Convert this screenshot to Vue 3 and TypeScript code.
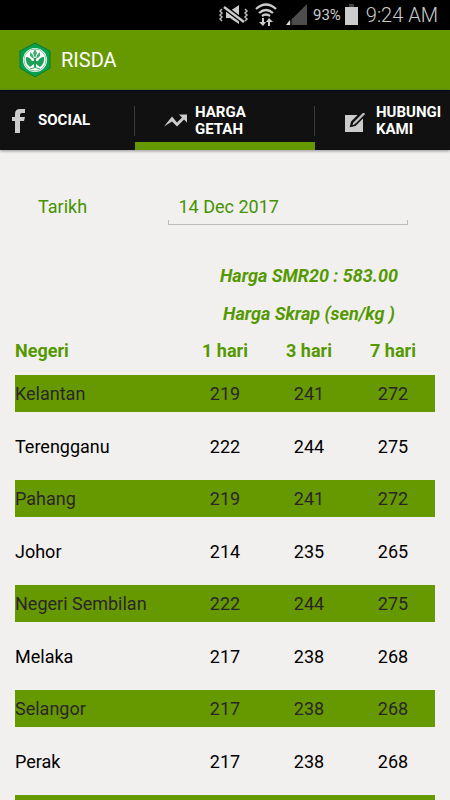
<script setup lang="ts">
import { ref } from 'vue'

interface Price {
  state: string
  h1: string
  h3: string
  h7: string
}

type TabId = 'social' | 'harga' | 'hubungi'

const tabs: { id: TabId; label: string }[] = [
  { id: 'social', label: 'SOCIAL' },
  { id: 'harga', label: 'HARGA GETAH' },
  { id: 'hubungi', label: 'HUBUNGI KAMI' },
]
const active = ref<TabId>('harga')
const date = ref('14 Dec 2017')

const prices: Price[] = [
  { state: 'Kelantan', h1: '219', h3: '241', h7: '272' },
  { state: 'Terengganu', h1: '222', h3: '244', h7: '275' },
  { state: 'Pahang', h1: '219', h3: '241', h7: '272' },
  { state: 'Johor', h1: '214', h3: '235', h7: '265' },
  { state: 'Negeri Sembilan', h1: '222', h3: '244', h7: '275' },
  { state: 'Melaka', h1: '217', h3: '238', h7: '268' },
  { state: 'Selangor', h1: '217', h3: '238', h7: '268' },
  { state: 'Perak', h1: '217', h3: '238', h7: '268' },
  { state: '', h1: '', h3: '', h7: '' },
]
</script>

<template>
  <div class="page">
    <div class="status">
      <svg class="mute" width="30" height="22" viewBox="0 0 30 22" aria-hidden="true">
        <path d="M7 7h4l9-6v19l-9-6H7z" fill="#ccc" />
        <path d="M5 3l20 15" stroke="#000" stroke-width="5" />
        <path d="M5 3l20 15" stroke="#ccc" stroke-width="2.4" />
        <path d="M3 5l-2 2 2 2-2 2 2 2-2 2 2 2M26 5l2 2-2 2 2 2-2 2 2 2-2 2" fill="none" stroke="#bbb" stroke-width="1.5" />
      </svg>
      <svg class="wifi" width="22" height="24" viewBox="0 0 22 24" aria-hidden="true">
        <g fill="none" stroke="#ccc" stroke-width="2.2">
          <path d="M1 6Q11-3 21 6" />
          <path d="M4 10q7-6 14 0" />
          <path d="M7 13q4-3 8 0" />
        </g>
        <path d="M7 15h2v4h2l-3 4-4-4h3zM13 23h2v-4h3l-4-4-3 4h2z" fill="#ccc" />
      </svg>
      <svg class="signal" width="21" height="22" viewBox="0 0 21 22" aria-hidden="true">
        <path d="M21 0v21H0z" fill="#4d4d4d" />
        <path d="M4 16v5H0z" fill="#ddd" />
        <path d="M5 15v7" stroke="#000" stroke-width="1" />
      </svg>
      <span class="percent">93%</span>
      <svg class="battery" width="13" height="22" viewBox="0 0 13 22" aria-hidden="true">
        <path d="M4 0h5v3H4z" fill="#444" />
        <path d="M0 3h13v18H0z" fill="#ccc" />
      </svg>
      <span class="time">9:24 AM</span>
    </div>

    <header class="appbar">
      <svg width="34" height="36" viewBox="0 0 34 36" aria-hidden="true">
        <path d="M17 1l15 8v17l-15 9L2 26V9z" fill="#08a04c" stroke="#087b38" stroke-width="1" />
        <circle cx="17" cy="18" r="12" fill="#fff" />
        <circle cx="17" cy="18" r="11" fill="none" stroke="#63b98a" stroke-width=".8" />
        <path d="M8 15q4 0 6 4h2v-3h2v3h2q2-4 6-4 1 6-4 10l-4-3v4h-2v-4l-4 3q-5-4-4-10z" fill="#1fa058" />
        <path d="M17 7l2 4-2 5-2-5zM12 10l3 3 1 4-4-3zM22 10l-3 3-1 4 4-3z" fill="#3cab6c" />
        <path d="M12 27q5-3 10 0" fill="none" stroke="#3cab6c" stroke-width="1" />
      </svg>
      <h1>RISDA</h1>
    </header>

    <nav class="tabs">
      <button
        v-for="tab in tabs"
        :key="tab.id"
        type="button"
        class="tab"
        :class="[tab.id, { active: active === tab.id }]"
        @click="active = tab.id"
      >
        <svg class="tab-icon" width="24" height="26" viewBox="0 0 24 26" aria-hidden="true">
          <path
            v-if="tab.id === 'social'"
            d="M8 25V13H5V9h3V6q0-5 5-5h5v4h-3q-2 0-2 2v2h5l-1 4h-4v12z"
            fill="#ccc"
          />
          <path
            v-else-if="tab.id === 'harga'"
            d="M0 18.5l8-10 5 6 5-5-3-3h8v8l-3-3-7 7-5-5z"
            fill="#ccc"
          />
          <template v-else>
            <path d="M0 7h18v17H0z" fill="#ccc" />
            <path d="M6 18l1-4L18 3l3 3-11 11z" fill="#111" stroke="#111" stroke-width="2" />
            <path d="M8 16.500l1-2L18.500 5l1 1-9.500 9.500z" fill="#ccc" stroke="#ccc" stroke-width="1" />
          </template>
        </svg>
        <span>{{ tab.label }}</span>
      </button>
    </nav>

    <main class="content">
      <div class="date-row">
        <label for="tarikh">Tarikh</label>
        <input id="tarikh" v-model="date" type="text" />
      </div>

      <table>
        <colgroup>
          <col class="wide" />
          <col span="3" />
        </colgroup>
        <thead>
          <tr>
            <td></td>
            <th colspan="3" class="note">Harga SMR20 : 583.00</th>
          </tr>
          <tr>
            <td></td>
            <th colspan="3" class="note">Harga Skrap (sen/kg )</th>
          </tr>
          <tr class="heads">
            <th class="state">Negeri</th>
            <th>1 hari</th>
            <th>3 hari</th>
            <th>7 hari</th>
          </tr>
        </thead>
        <tbody>
          <tr v-for="(p, i) in prices" :key="i">
            <td class="state">{{ p.state }}</td>
            <td>{{ p.h1 }}</td>
            <td>{{ p.h3 }}</td>
            <td>{{ p.h7 }}</td>
          </tr>
        </tbody>
      </table>
    </main>
  </div>
</template>

<style>
body {
  background: #f2f0ef;
}
</style>

<style scoped>
.page {
  display: flex;
  flex-direction: column;
  height: 100vh;
  overflow: hidden;
  background: #f2f0ef;
  font-family: Roboto, sans-serif;
  font-size: 18px;
}

.status {
  display: flex;
  flex: none;
  align-items: center;
  justify-content: flex-end;
  height: 30px;
  padding-right: 12px;
  background: #000;
  color: #ccc;
}

.wifi {
  margin-left: 6px;
}

.signal {
  margin-left: 9px;
}

.percent {
  margin-left: 6px;
  font-size: 15px;
}

.battery {
  margin-left: 4px;
}

.time {
  margin-left: 8px;
  font-size: 20px;
  font-weight: 300;
  line-height: 30px;
}

.appbar {
  display: flex;
  flex: none;
  align-items: center;
  gap: 9px;
  height: 60px;
  padding: 0 18px;
  background: #669900;
  color: #fff;
}

.appbar h1 {
  margin: 0;
  font-size: 20px;
  font-weight: 400;
}

.tabs {
  display: grid;
  flex: none;
  grid-template-columns: 3fr 4fr 3fr;
  height: 60px;
  box-sizing: border-box;
  border-top: 1px solid #06061c;
  background: #111;
  box-shadow: 0 1px 3px #0006;
}

.tab {
  display: flex;
  align-items: center;
  gap: 7px;
  min-width: 0;
  padding: 0 0 0 7px;
  border: 0;
  background: linear-gradient(#3a3a3a, #3a3a3a) right center / 1px 30px no-repeat;
  color: #fff;
  font: bold 15px/17px Roboto, sans-serif;
  text-align: left;
}

.tab.harga {
  padding: 0 60px 0 29px;
}

.tab.hubungi {
  padding-left: 30px;
  background: none;
}

.tab.active {
  box-shadow: inset 0 -8px #669900;
}

.tab-icon {
  flex: none;
}

.content {
  flex: 1;
  min-height: 0;
  padding: 0 15px;
  overflow-y: auto;
  scrollbar-width: none;
}

.date-row {
  display: flex;
  align-items: center;
  margin: 37px 27px 31px 23px;
  color: #449300;
}

.date-row label {
  flex: 1;
}

.date-row input {
  width: 65%;
  height: 38px;
  box-sizing: border-box;
  padding: 0 11px;
  border: 0;
  outline: 0;
  background:
    linear-gradient(#bbb, #bbb) left bottom / 1px 5px no-repeat,
    linear-gradient(#bbb, #bbb) right bottom / 1px 5px no-repeat,
    linear-gradient(#bbb, #bbb) left bottom / 100% 1px no-repeat;
  color: inherit;
  font: inherit;
}

table {
  width: 100%;
  table-layout: fixed;
  border-spacing: 0;
  color: #000;
}

col {
  width: 20%;
}

col.wide {
  width: 40%;
}

th,
td {
  box-sizing: border-box;
  padding: 0;
  text-align: center;
  white-space: nowrap;
}

thead tr {
  height: 38px;
}

thead th {
  color: #559900;
  font-weight: 700;
}

.note {
  font-style: italic;
}

.heads th {
  height: 43px;
  padding-bottom: 6px;
}

.state {
  text-align: left;
}

tbody td {
  height: 53px;
  border-bottom: 15px solid transparent;
  background-clip: padding-box;
}

tbody tr:nth-child(odd) td {
  height: 52px;
  background-color: #669900;
  color: #2b2528;
}
</style>
